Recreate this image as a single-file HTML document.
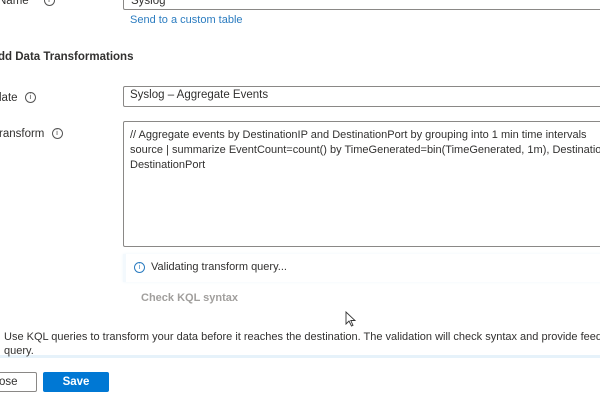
<!DOCTYPE html>
<html><head><style>
html,body{margin:0;width:600px;height:400px;overflow:hidden}
body{background:#fff;font-family:"Liberation Sans",sans-serif;color:#323130}
#w{position:relative;width:600px;height:400px;overflow:hidden}
.a{position:absolute;white-space:nowrap}
.box{position:absolute;border:1px solid #8a8886;border-radius:2px;background:#fff;box-sizing:border-box}
.i{display:inline-block;width:9px;height:9px;border:1px solid #555;border-radius:50%;font-size:7px;line-height:9px;text-align:center;vertical-align:middle;margin-left:4px}
</style></head><body><div id="w">
<div class="a" style="left:-2px;top:-5px;font-size:11.5px">Name * <span class="i">i</span></div>
<div class="box" style="left:123px;top:-10px;width:490px;height:20px"></div>
<div class="a" style="left:131px;top:-5px;font-size:11.5px">Syslog</div>
<div class="a" style="left:130px;top:14px;font-size:11px;color:#2b7cc0">Send to a custom table</div>
<div class="a" style="left:-2px;top:51px;font-size:11.5px;font-weight:bold">dd Data Transformations</div>
<div class="a" style="left:-1px;top:92px;font-size:11.5px">late <span class="i">i</span></div>
<div class="box" style="left:123px;top:86px;width:490px;height:21px"></div>
<div class="a" style="left:130px;top:89px;font-size:11.5px">Syslog – Aggregate Events</div>
<div class="a" style="left:-1px;top:128px;font-size:11.5px">ransform <span class="i">i</span></div>
<div class="box" style="left:123px;top:121px;width:490px;height:126px"></div>
<div class="a" style="left:130px;top:128px;font-size:11px;line-height:15px">// Aggregate events by DestinationIP and DestinationPort by grouping into 1 min time intervals<br>source | summarize EventCount=count() by TimeGenerated=bin(TimeGenerated, 1m), DestinationIP,<br>DestinationPort</div>
<div class="a" style="left:123px;top:254px;width:480px;height:28px;background:#fff;border-left:3px solid #f3f9fd;box-shadow:0 0 3px #eef6fb"></div>
<div class="a" style="left:134px;top:261px;font-size:11px"><span class="i" style="margin:0 6px 0 0;border-color:#2b7cc0;color:#2b7cc0">i</span>Validating transform query...</div>
<div class="a" style="left:141px;top:292px;font-size:11px;font-weight:bold;color:#a19f9d">Check KQL syntax</div>
<div class="a" style="left:0;top:325px;width:600px;height:30px;border-bottom:3px solid #e6f2fa;background:#fff"></div>
<div class="a" style="left:4px;top:330px;font-size:11px;line-height:14px">Use KQL queries to transform your data before it reaches the destination. The validation will check syntax and provide feedback on your<br>query.</div>
<div class="box" style="left:-10px;top:372px;width:47px;height:20px"></div>
<div class="a" style="left:-1px;top:376px;font-size:11.5px">ose</div>
<div class="a" style="left:43px;top:372px;width:66px;height:20px;background:#0078d4;border-radius:2px;color:#fff;font-size:11.5px;font-weight:bold;text-align:center;line-height:20px">Save</div>
<svg class="a" style="left:345px;top:311px" width="12" height="17" viewBox="0 0 12 17"><path d="M1 1 L1 13 L4 10 L6.5 15 L8 14.3 L5.8 9.5 L10 9.5 Z" fill="#fff" stroke="#333" stroke-width="0.9"/></svg>
</div></body></html>
